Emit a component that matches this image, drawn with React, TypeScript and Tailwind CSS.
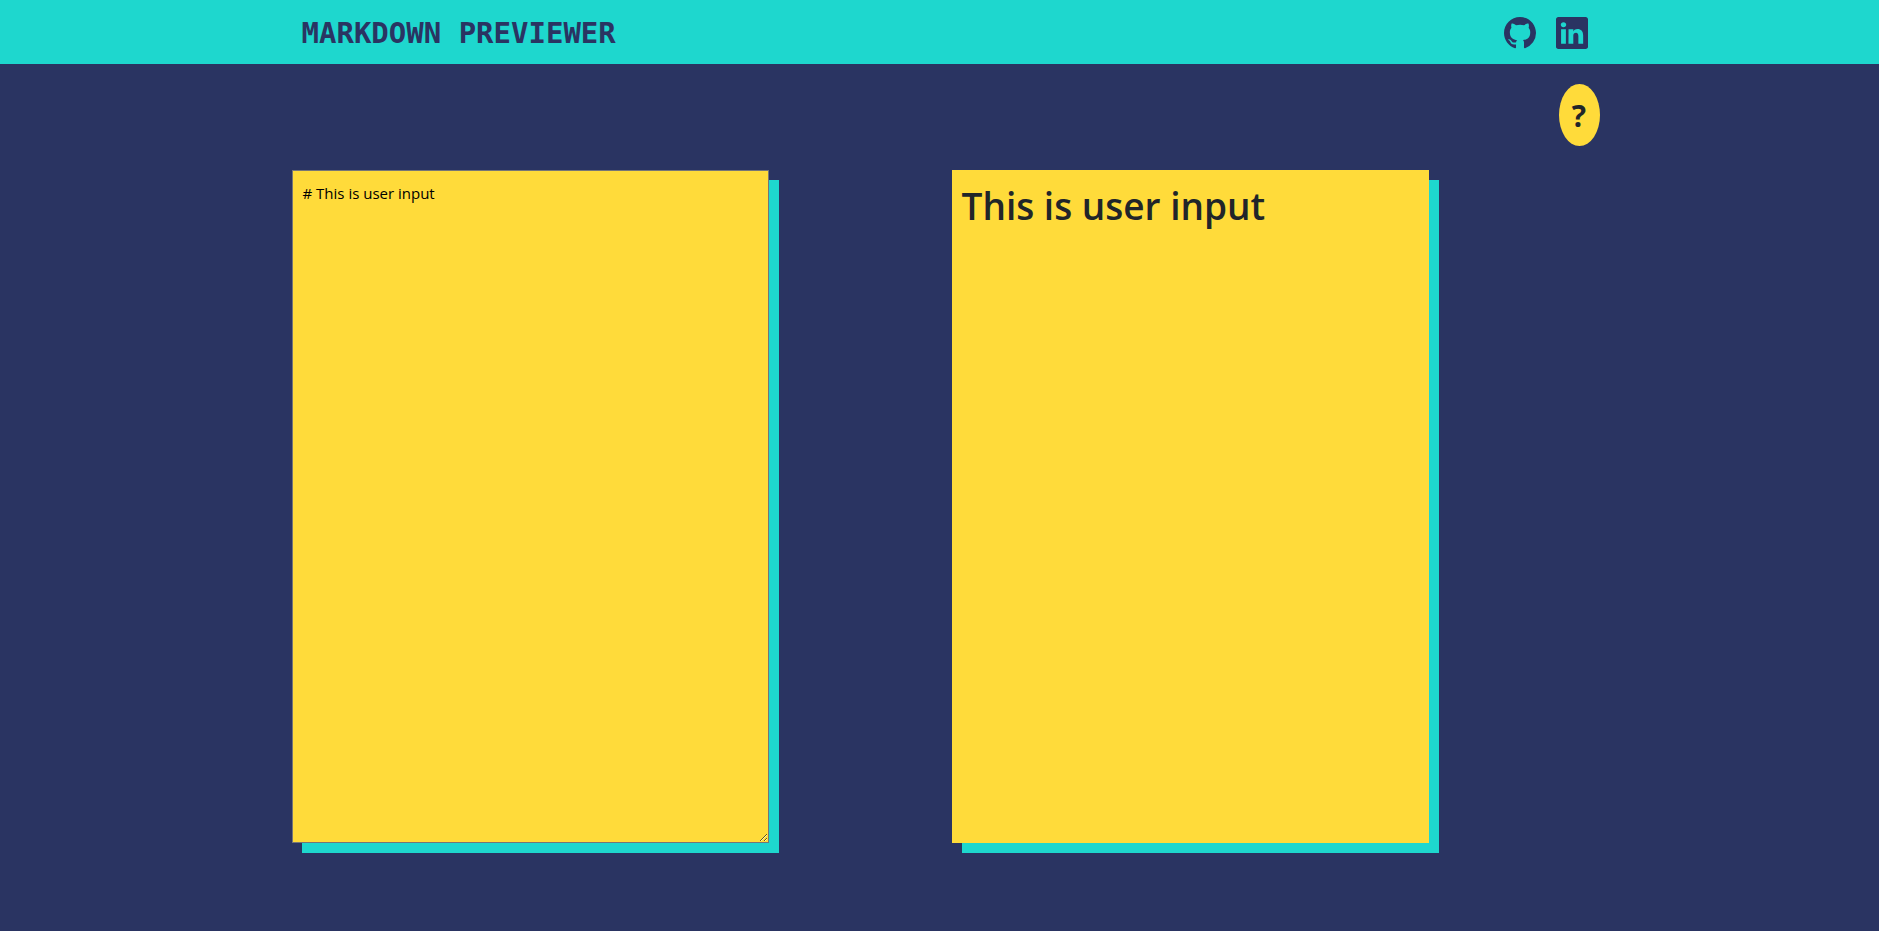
import { useState } from 'react';
import { BsGithub, BsLinkedin } from 'react-icons/bs';

function Header() {
  return (
    <header className="bg-[#1ed7ce] text-[#2a3462]">
      <div className="mx-auto flex h-16 max-w-[1320px] items-center justify-between pt-px pr-3 pl-[22px]">
        <h1 className="font-['DejaVu_Sans_Mono',monospace] text-[29px] leading-8 font-bold">MARKDOWN PREVIEWER</h1>
        <nav className="flex gap-5">
          <a href="#github" aria-label="GitHub">
            <BsGithub className="size-8" />
          </a>
          <a href="#linkedin" aria-label="LinkedIn">
            <BsLinkedin className="size-8" />
          </a>
        </nav>
      </div>
    </header>
  );
}

function Preview({ source }: { source: string }) {
  return (
    <section
      aria-label="Preview"
      className="h-[673px] w-3/4 overflow-auto bg-[#ffdb3a] p-[10px] shadow-[10px_10px_0_#1ed7ce]"
    >
      {source.split('\n').map((line, index) =>
        line.startsWith('# ') ? (
          <h2 key={index} className="mb-2 text-[37px] leading-[52px] font-semibold">
            {line.slice(2)}
          </h2>
        ) : (
          <p key={index}>{line}</p>
        ),
      )}
    </section>
  );
}

export default function App() {
  const [source, setSource] = useState('# This is user input');

  return (
    <div className="min-h-screen bg-[#2a3462] font-['Open_Sans','Noto_Sans',sans-serif] text-base text-[#212529]">
      <Header />
      <main className="mx-auto max-w-[1320px] pb-10">
        <div className="flex justify-end pt-5">
          <button
            type="button"
            aria-label="Help"
            className="flex h-[62px] w-[41px] items-center justify-center rounded-[50%] bg-[#ffdb3a] pt-0.5 text-[30px] leading-10 font-bold"
          >
            ?
          </button>
        </div>
        <div className="mt-6 grid grid-cols-2">
          <div className="px-3">
            <textarea
              aria-label="Markdown input"
              value={source}
              onChange={(event) => setSource(event.target.value)}
              className="block h-[673px] w-3/4 resize border border-[#767676] bg-[#ffdb3a] p-[10px] text-[15px] leading-6 text-black shadow-[10px_10px_0_#1ed7ce] outline-none"
            />
          </div>
          <div className="px-3">
            <Preview source={source} />
          </div>
        </div>
      </main>
    </div>
  );
}
